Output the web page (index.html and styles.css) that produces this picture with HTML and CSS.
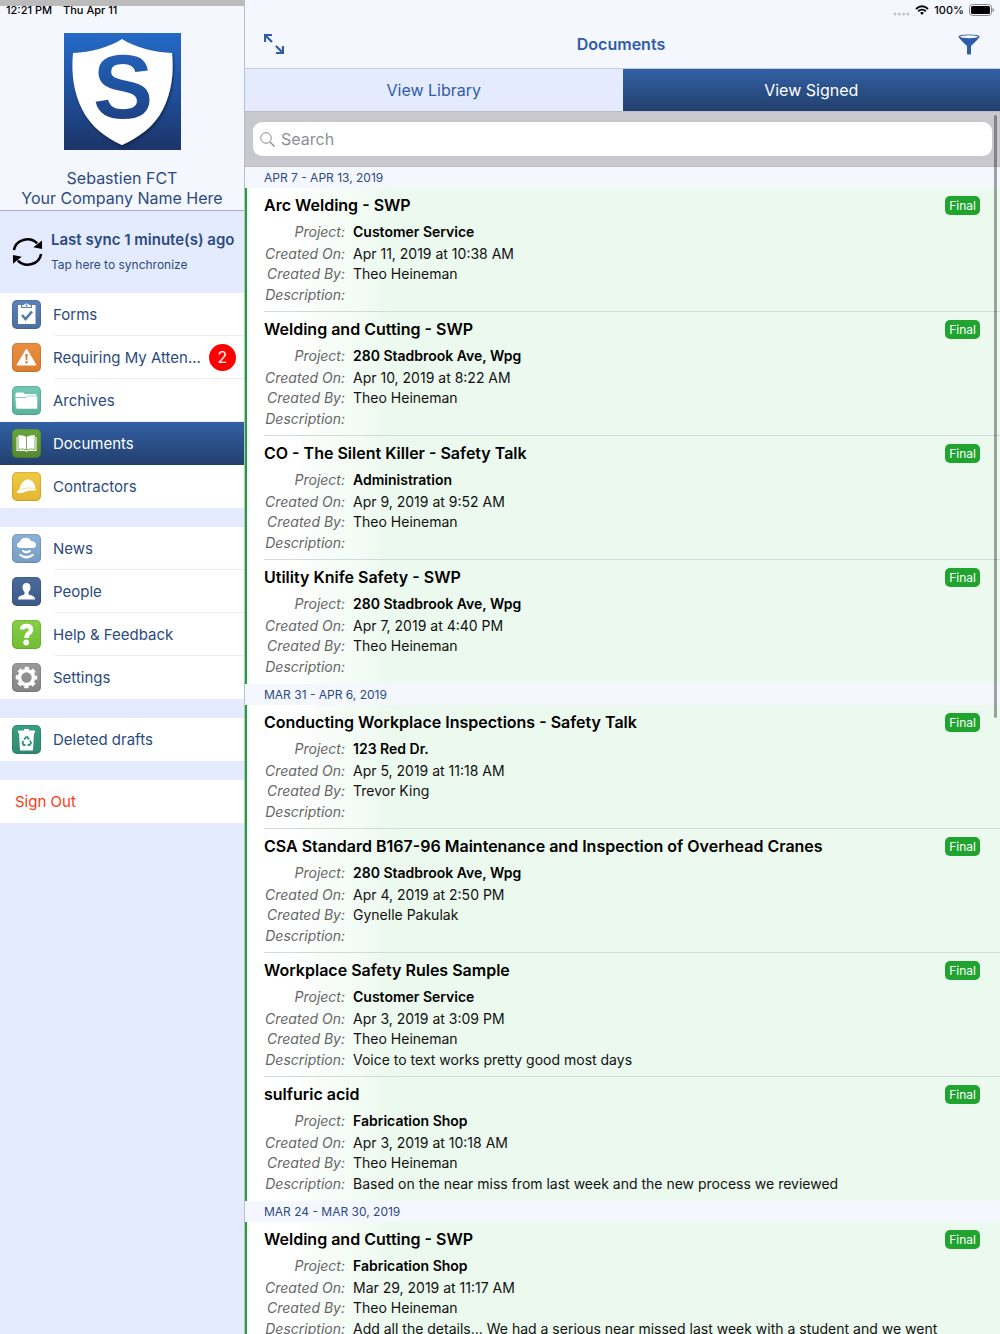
FILE: index.html
```
<!DOCTYPE html>
<html lang="en">
<head>
    <meta charset="UTF-8">
    <meta name="viewport" content="width=device-width, initial-scale=1.0">
    <title>Documents</title>
    <link rel="stylesheet" href="styles.css">
</head>
<body>
    <aside class="sidebar">
        <div class="status-left"><span>12:21 PM</span><span>Thu Apr 11</span></div>
        <div class="profile">
            <svg class="logo" viewBox="0 0 117 117" role="img" aria-label="Company logo">
                <defs>
                    <linearGradient id="logoBg" x1="0" y1="0" x2="0" y2="117" gradientUnits="userSpaceOnUse">
                        <stop offset="0" stop-color="#256ac6"/>
                        <stop offset="0.5" stop-color="#1f509c"/>
                        <stop offset="1" stop-color="#1c3468"/>
                    </linearGradient>
                    <filter id="logoShadow" x="-10%" y="-10%" width="120%" height="120%">
                        <feDropShadow dx="1" dy="2" stdDeviation="1" flood-color="#0b1c3e" flood-opacity="0.7"/>
                    </filter>
                </defs>
                <rect width="117" height="117" fill="url(#logoBg)"/>
                <path d="M58 6C44 15 27 19 9 20C7 42 10 60 18 76C27 94 41 104 58 112C75 104 90 94 99 76C107 60 110 42 108 20C90 19 72 15 58 6z" fill="#fff" filter="url(#logoShadow)"/>
                <text x="59" y="85" text-anchor="middle" class="logo-letter">S</text>
            </svg>
            <div class="profile-name">Sebastien FCT</div>
            <div class="profile-name">Your Company Name Here</div>
        </div>
        <button class="sync" type="button">
            <svg class="sync-icon" viewBox="0 0 32 32">
                <path d="M2 14A14 13 0 0 1 26 7M30 18A14 13 0 0 1 6 25" fill="none" stroke="#000" stroke-width="2.600"/>
                <path d="M31 4V13L22 11zM1 28V19L10 21z" fill="#000"/>
            </svg>
            <span class="sync-text">
                <strong>Last sync 1 minute(s) ago</strong>
                <small>Tap here to synchronize</small>
            </span>
        </button>
        <nav>
            <ul class="menu">
                <li><a href="#">
                    <svg class="icon blue" viewBox="0 0 29 29">
                        <path d="M6 5H9V8H20V5H23.500V24H6z" fill="#fff"/>
                        <path d="M10 7V5.500Q10 5 11 5H12Q12 3.500 14.500 3.500T17 5H18Q19 5 19 5.500V7z" fill="#fff"/>
                        <circle cx="14.500" cy="5.500" r="1" fill="#5378ad"/>
                        <path d="M10 15L13.500 19L20 11.500" fill="none" stroke="#5378ad" stroke-width="2.600"/>
                    </svg>
                    <span>Forms</span></a></li>
                <li><a href="#">
                    <svg class="icon orange" viewBox="0 0 29 29">
                        <path d="M14.500 6L24 22H5z" fill="#fff" stroke="#fff" stroke-linejoin="round"/>
                        <path d="M13.300 11H15.700L15.200 17H13.800z" fill="#d9792f"/>
                        <circle cx="14.500" cy="19.200" r="1.200" fill="#d9792f"/>
                    </svg>
                    <span>Requiring My Atten...</span><b class="count">2</b></a></li>
                <li><a href="#">
                    <svg class="icon teal" viewBox="0 0 29 29">
                        <path d="M3.500 8Q3.500 6.500 5 6.500H11Q12 6.500 12.500 8H23.500Q24.500 8 24.500 9V11H3.500z" fill="#fff"/>
                        <path d="M3 11.500H14L15.500 10H25.500V22Q25.500 23 24.500 23H5Q4 23 4 22z" fill="#fff" stroke="#65bda8" stroke-width="0.600"/>
                    </svg>
                    <span>Archives</span></a></li>
                <li class="active"><a href="#">
                    <svg class="icon green" viewBox="0 0 29 29">
                        <path d="M4.500 8H6V6.500Q11 5.500 14.500 8Q18 5.500 23 6.500V8H24.500V22H16Q14.500 23.500 13 22H4.500z" fill="#fff"/>
                        <path d="M14.500 8V21M6 8V20.500Q11 19 14.500 21Q18 19 23 20.500V8" fill="none" stroke="#5e9636" stroke-width="0.800"/>
                    </svg>
                    <span>Documents</span></a></li>
                <li><a href="#">
                    <svg class="icon yellow" viewBox="0 0 29 29">
                        <path d="M7.500 17.500Q8 12 12 9Q13.500 7 17 7.500Q23 9.500 23.500 17Q24.500 18.500 22 18.500Q16 18 11.500 20.500Q7 22 5 20.500Q4 19 7.500 17.500z" fill="#fff"/>
                        <path d="M8 18Q14 15 22.500 16.500" fill="none" stroke="#ecd27d" stroke-width="0.700"/>
                    </svg>
                    <span>Contractors</span></a></li>
            </ul>
            <ul class="menu">
                <li><a href="#">
                    <svg class="icon sky" viewBox="0 0 29 29">
                        <path d="M8 14Q5 13.500 5 11Q5 8.500 8 8Q9 4 13 4Q17 3 19 7Q24 7.500 24 11Q24 13.500 21 14z" fill="#fff"/>
                        <path d="M10.500 16.500Q14.500 20 18.500 16.500M7.500 20.500Q14.500 26 21.500 20.500" fill="none" stroke="#fff" stroke-width="2.200"/>
                    </svg>
                    <span>News</span></a></li>
                <li><a href="#">
                    <svg class="icon navy" viewBox="0 0 29 29">
                        <path d="M14.500 6Q18.500 6 18.500 10.500Q18.500 13.500 16.500 15V17Q17 18 20 18.500Q23 19.500 23 22.500H6Q6 19.500 9 18.500Q12 18 12.500 17V15Q10.500 13.500 10.500 10.500Q10.500 6 14.500 6z" fill="#fff"/>
                    </svg>
                    <span>People</span></a></li>
                <li><a href="#">
                    <svg class="icon lime" viewBox="0 0 29 29">
                        <path d="M10 9.500Q10.500 6 14.500 6Q19 6 19 9.500Q19 12 16.500 13.500Q14.500 15 14.500 18" fill="none" stroke="#fff" stroke-width="4.400"/>
                        <circle cx="14.200" cy="22.500" r="2.900" fill="#fff"/>
                    </svg>
                    <span>Help &amp; Feedback</span></a></li>
                <li><a href="#">
                    <svg class="icon gray" viewBox="0 0 29 29">
                        <circle cx="14.500" cy="14.500" r="7" fill="none" stroke="#fff" stroke-width="3.600"/>
                        <circle cx="14.500" cy="14.500" r="9.400" fill="none" stroke="#fff" stroke-width="2.800" stroke-dasharray="4.200 3.183" stroke-dashoffset="2.100"/>
                    </svg>
                    <span>Settings</span></a></li>
            </ul>
            <ul class="menu">
                <li><a href="#">
                    <svg class="icon emerald" viewBox="0 0 29 29">
                        <path d="M6 5.500H12V4H17V5.500H23V8H6z" fill="#fff"/>
                        <path d="M7 8H22L21 25.500H8z" fill="#fff"/>
                        <g fill="none" stroke="#359478" stroke-width="1.800">
                            <path d="M12.200 14.500L14 12.200H15.500L17 14.500"/>
                            <path d="M18 15.500L19 18L17.500 20H15.500"/>
                            <path d="M13.500 20H11.500L10.500 18L11.500 15.800"/>
                        </g>
                    </svg>
                    <span>Deleted drafts</span></a></li>
            </ul>
            <ul class="menu">
                <li><a class="sign-out" href="#">Sign Out</a></li>
            </ul>
        </nav>
    </aside>

    <main class="content">
        <header class="topbar">
            <div class="status-right">
                <svg class="signal" viewBox="0 0 17 4"><path d="M2 2H16" stroke="#c3c4cb" stroke-width="3" stroke-linecap="round" stroke-dasharray="0 4.300"/></svg>
                <svg class="wifi" viewBox="0 0 14 10">
                    <path d="M1 4Q7 -1.500 13 4M3.200 6.300Q7 3 10.800 6.300" fill="none" stroke="#000" stroke-width="1.800"/>
                    <path d="M5 7.800Q7 6.200 9 7.800L7 10z"/>
                </svg>
                <span>100%</span>
                <svg class="battery" viewBox="0 0 25 12">
                    <rect x="0.500" y="0.500" width="22" height="11" rx="3" fill="none" stroke="#85868b"/>
                    <rect x="2" y="2" width="19" height="8" rx="1.500"/>
                    <path d="M23.500 4Q25 4.500 25 6T23.500 8z" fill="#85868b"/>
                </svg>
            </div>
            <div class="title-row">
                <button type="button" aria-label="Expand">
                    <svg class="expand" viewBox="0 0 20 20">
                        <path d="M1 8V1H8M2 2L8 8M12 12L18 18M19 12V19H12" fill="none" stroke="#2f5ca6" stroke-width="2.200"/>
                    </svg>
                </button>
                <h1>Documents</h1>
                <button type="button" aria-label="Filter">
                    <svg class="funnel" viewBox="0 0 22 21">
                        <path d="M0.500 2.500Q0.500 0.500 11 0.500T21.500 2.500Q21.500 4 13 12V20Q11 21 9 20V12Q0.500 4 0.500 2.500z" fill="#2f5ca6"/>
                        <ellipse cx="11" cy="2.700" rx="9" ry="1.500" fill="#f5f7ff"/>
                    </svg>
                </button>
            </div>
        </header>
        <div class="tabs">
            <button type="button">View Library</button>
            <button type="button" class="selected">View Signed</button>
        </div>
        <div class="search">
            <label class="search-box">
                <svg class="magnifier" viewBox="0 0 15 15"><path d="M10 10L14.500 14.500" stroke="#8e8e93" stroke-width="1.400"/><circle cx="6" cy="6" r="5.300" fill="none" stroke="#8e8e93"/></svg>
                <input type="search" placeholder="Search" aria-label="Search">
            </label>
        </div>

        <section class="week">
            <h2>APR 7 - APR 13, 2019</h2>
            <ul class="docs">
                <li>
                    <div class="doc-head"><h3>Arc Welding - SWP</h3><span class="final">Final</span></div>
                    <dl>
                        <dt>Project:</dt><dd class="project">Customer Service</dd>
                        <dt>Created On:</dt><dd>Apr 11, 2019 at 10:38 AM</dd>
                        <dt>Created By:</dt><dd>Theo Heineman</dd>
                        <dt>Description:</dt><dd></dd>
                    </dl>
                </li>
                <li>
                    <div class="doc-head"><h3>Welding and Cutting - SWP</h3><span class="final">Final</span></div>
                    <dl>
                        <dt>Project:</dt><dd class="project">280 Stadbrook Ave, Wpg</dd>
                        <dt>Created On:</dt><dd>Apr 10, 2019 at 8:22 AM</dd>
                        <dt>Created By:</dt><dd>Theo Heineman</dd>
                        <dt>Description:</dt><dd></dd>
                    </dl>
                </li>
                <li>
                    <div class="doc-head"><h3>CO - The Silent Killer - Safety Talk</h3><span class="final">Final</span></div>
                    <dl>
                        <dt>Project:</dt><dd class="project">Administration</dd>
                        <dt>Created On:</dt><dd>Apr 9, 2019 at 9:52 AM</dd>
                        <dt>Created By:</dt><dd>Theo Heineman</dd>
                        <dt>Description:</dt><dd></dd>
                    </dl>
                </li>
                <li>
                    <div class="doc-head"><h3>Utility Knife Safety - SWP</h3><span class="final">Final</span></div>
                    <dl>
                        <dt>Project:</dt><dd class="project">280 Stadbrook Ave, Wpg</dd>
                        <dt>Created On:</dt><dd>Apr 7, 2019 at 4:40 PM</dd>
                        <dt>Created By:</dt><dd>Theo Heineman</dd>
                        <dt>Description:</dt><dd></dd>
                    </dl>
                </li>
            </ul>
        </section>

        <section class="week">
            <h2>MAR 31 - APR 6, 2019</h2>
            <ul class="docs">
                <li>
                    <div class="doc-head"><h3>Conducting Workplace Inspections - Safety Talk</h3><span class="final">Final</span></div>
                    <dl>
                        <dt>Project:</dt><dd class="project">123 Red Dr.</dd>
                        <dt>Created On:</dt><dd>Apr 5, 2019 at 11:18 AM</dd>
                        <dt>Created By:</dt><dd>Trevor King</dd>
                        <dt>Description:</dt><dd></dd>
                    </dl>
                </li>
                <li>
                    <div class="doc-head"><h3>CSA Standard B167-96 Maintenance and Inspection of Overhead Cranes</h3><span class="final">Final</span></div>
                    <dl>
                        <dt>Project:</dt><dd class="project">280 Stadbrook Ave, Wpg</dd>
                        <dt>Created On:</dt><dd>Apr 4, 2019 at 2:50 PM</dd>
                        <dt>Created By:</dt><dd>Gynelle Pakulak</dd>
                        <dt>Description:</dt><dd></dd>
                    </dl>
                </li>
                <li>
                    <div class="doc-head"><h3>Workplace Safety Rules Sample</h3><span class="final">Final</span></div>
                    <dl>
                        <dt>Project:</dt><dd class="project">Customer Service</dd>
                        <dt>Created On:</dt><dd>Apr 3, 2019 at 3:09 PM</dd>
                        <dt>Created By:</dt><dd>Theo Heineman</dd>
                        <dt>Description:</dt><dd>Voice to text works pretty good most days</dd>
                    </dl>
                </li>
                <li>
                    <div class="doc-head"><h3>sulfuric acid</h3><span class="final">Final</span></div>
                    <dl>
                        <dt>Project:</dt><dd class="project">Fabrication Shop</dd>
                        <dt>Created On:</dt><dd>Apr 3, 2019 at 10:18 AM</dd>
                        <dt>Created By:</dt><dd>Theo Heineman</dd>
                        <dt>Description:</dt><dd>Based on the near miss from last week and the new process we reviewed</dd>
                    </dl>
                </li>
            </ul>
        </section>

        <section class="week">
            <h2>MAR 24 - MAR 30, 2019</h2>
            <ul class="docs">
                <li>
                    <div class="doc-head"><h3>Welding and Cutting - SWP</h3><span class="final">Final</span></div>
                    <dl>
                        <dt>Project:</dt><dd class="project">Fabrication Shop</dd>
                        <dt>Created On:</dt><dd>Mar 29, 2019 at 11:17 AM</dd>
                        <dt>Created By:</dt><dd>Theo Heineman</dd>
                        <dt>Description:</dt><dd>Add all the details... We had a serious near missed last week with a student and we went</dd>
                    </dl>
                </li>
            </ul>
        </section>
        <div class="scrollbar"></div>
    </main>
</body>
</html>
```
FILE: styles.css
```
* {
    box-sizing: border-box;
}
body {
    margin: 0;
    display: flex;
    height: 100vh;
    overflow: hidden;
    font-family: Inter, "Liberation Sans", sans-serif;
    font-size: 14px;
    color: #111;
    background: #e5ebff;
}
h1, h2, h3, ul, dl, dd {
    margin: 0;
    padding: 0;
}
ul {
    list-style: none;
}
button {
    border: none;
    padding: 0;
    background: none;
    font-family: inherit;
    cursor: pointer;
}
svg {
    display: block;
    flex: none;
}

/* sidebar */
.sidebar {
    flex: none;
    width: 245px;
    border-right: 1px solid #bcbec8;
    color: #2b4a7e;
}
.status-left {
    display: flex;
    gap: 11px;
    height: 20px;
    padding-left: 6px;
    background: linear-gradient(#bbb 6px, #f5f7ff 6px);
    color: #000;
    font-size: 11px;
    font-weight: 500;
    line-height: 20px;
}
.profile {
    padding: 13px 0 2px;
    border-bottom: 1px solid #a9acc4;
    background: #f5f7ff;
    text-align: center;
}
.logo {
    width: 117px;
    height: 117px;
    margin: 0 auto 18px;
}
.logo-letter {
    font-family: "Liberation Sans", sans-serif;
    font-size: 90px;
    font-weight: bold;
    fill: url(#logoBg);
}
.profile-name {
    font-size: 16px;
    line-height: 20px;
}
.sync {
    display: flex;
    align-items: center;
    gap: 8px;
    width: 100%;
    height: 82px;
    padding-left: 12px;
    color: #2b4a7e;
    text-align: left;
}
.sync-icon {
    width: 31px;
    height: 32px;
}
.sync-text strong {
    display: block;
    font-size: 15px;
    font-weight: 600;
    line-height: 26px;
    white-space: nowrap;
}
.sync-text small {
    display: block;
    font-size: 12px;
    line-height: 24px;
}
.menu {
    margin-bottom: 19px;
    background: #fff;
}
.menu a {
    display: flex;
    align-items: center;
    gap: 8px;
    height: 43px;
    padding: 0 8px 0 12px;
    color: #2b4a7e;
    font-size: 15px;
    text-decoration: none;
    white-space: nowrap;
    background: linear-gradient(#e5ebf7, #e5ebf7) 55px 100% / 100% 1px no-repeat;
}
.menu li:last-child a {
    background: none;
}
.menu .active a {
    color: #fff;
    background: linear-gradient(#3260a5, #223f6c);
}
.menu .sign-out {
    padding-left: 15px;
    color: #f93a12;
}
.count {
    flex: none;
    width: 27px;
    height: 27px;
    margin-left: auto;
    border-radius: 50%;
    background: #f00;
    color: #fff;
    font-size: 16px;
    font-weight: 400;
    line-height: 27px;
    text-align: center;
}
.icon {
    width: 29px;
    height: 29px;
    margin-right: 4px;
    border-radius: 5px;
    box-shadow: inset 0 0 1px 1px rgba(0, 0, 0, 0.12);
}
.blue { background: linear-gradient(#5b82b8, #4c6fa3); }
.orange { background: linear-gradient(#e98f3f, #de7f30); }
.teal { background: linear-gradient(#74c9b5, #58b39e); }
.green { background: linear-gradient(#69a43c, #538a30); }
.yellow { background: linear-gradient(#f0cb42, #e3b632); }
.sky { background: linear-gradient(#8db1d6, #779dc5); }
.navy { background: linear-gradient(#4a6a9d, #3b5988); }
.lime { background: linear-gradient(#85d048, #70be33); }
.gray { background: linear-gradient(#9b9b9b, #858585); }
.emerald { background: linear-gradient(#3b9f82, #2f8b6f); }

/* documents pane */
.content {
    position: relative;
    flex: 1;
    min-width: 0;
    background: #f5f7ff;
}
.topbar {
    height: 69px;
    border-bottom: 1px solid #c9ccd5;
}
.status-right {
    display: flex;
    align-items: center;
    justify-content: flex-end;
    gap: 5px;
    height: 20px;
    padding-right: 6px;
    color: #000;
    font-size: 11px;
    font-weight: 500;
}
.signal {
    width: 17px;
    height: 4px;
    margin-top: 7px;
}
.wifi {
    width: 14px;
    height: 10px;
}
.battery {
    width: 25px;
    height: 12px;
}
.title-row {
    display: flex;
    align-items: center;
    justify-content: space-between;
    height: 48px;
    padding: 0 20px 0 19px;
}
.title-row h1 {
    color: #2f5ca6;
    font-size: 16px;
    font-weight: 600;
}
.expand {
    width: 20px;
    height: 20px;
}
.funnel {
    width: 22px;
    height: 21px;
}
.tabs {
    display: flex;
    height: 42px;
}
.tabs button {
    flex: 1;
    background: #e5ebff;
    color: #2f5ca6;
    font-size: 16px;
}
.tabs .selected {
    background: linear-gradient(#3260a5, #223f6c);
    color: #fff;
}
.search {
    padding: 10px 8px;
    border-top: 1px solid #bcbcc3;
    border-bottom: 1px solid #bcbcc3;
    background: #c9c8ce;
}
.search-box {
    display: flex;
    align-items: center;
    gap: 6px;
    height: 34px;
    padding: 0 7px;
    border-radius: 9px;
    background: #fff;
}
.magnifier {
    width: 15px;
    height: 15px;
}
.search-box input {
    flex: 1;
    padding: 0;
    border: none;
    outline: none;
    background: none;
    font-family: inherit;
    font-size: 16px;
}
.search-box input::placeholder {
    color: #8e8e93;
}
.week h2 {
    padding-left: 19px;
    color: #2b4a7e;
    font-size: 12px;
    font-weight: 400;
    line-height: 21px;
}
.docs {
    padding-left: 17px;
    border-left: 2px solid #1fa338;
    background: linear-gradient(to right, #fff 40px, #ebf9ee 150px);
}
.docs li {
    height: 124px;
    padding-top: 7px;
    border-bottom: 1px solid #cfdbdc;
}
.docs li:last-child {
    border-bottom: none;
}
.doc-head {
    display: flex;
    align-items: center;
    justify-content: space-between;
    height: 20px;
    margin-bottom: 5px;
    padding-right: 20px;
}
.doc-head h3 {
    color: #000;
    font-size: 16px;
    font-weight: 600;
}
.final {
    padding: 0 4px;
    border-radius: 5px;
    background: #21a32f;
    color: #fff;
    font-size: 12px;
    line-height: 19px;
}
dl {
    display: grid;
    grid-template-columns: 81px 1fr;
    grid-template-rows: 22px 22px 18px 24px;
    column-gap: 8px;
    align-items: center;
    white-space: nowrap;
}
dt {
    justify-self: end;
    color: #666;
    font-style: italic;
}
.project {
    color: #000;
    font-weight: 600;
}
.scrollbar {
    position: absolute;
    top: 115px;
    right: 3px;
    width: 3px;
    height: 603px;
    border-radius: 2px;
    background: rgba(0, 0, 0, 0.35);
}
```
